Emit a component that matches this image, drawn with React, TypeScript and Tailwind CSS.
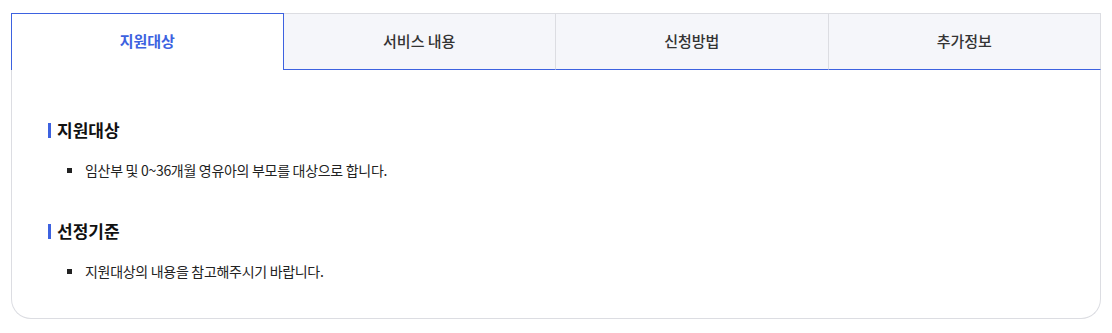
import React from "react";

const tabs = ["지원대상", "서비스 내용", "신청방법", "추가정보"];

function Section({ title, item, className = "" }: { title: string; item: string; className?: string }) {
  return (
    <div className={className}>
      <div className="flex items-center h-[24px]">
        <span className="block w-[3px] h-[15px] bg-[#3d62e0]" />
        <h3 className="ml-[6px] text-[17px] leading-[24px] font-bold text-[#111]">{title}</h3>
      </div>
      <ul className="mt-[17px] pl-[19px]">
        <li className="flex items-center h-[22px]">
          <span className="block w-[5px] h-[5px] bg-[#222]" />
          <span className="ml-[13px] text-[14px] leading-[22px] tracking-[-0.3px] text-[#222]">{item}</span>
        </li>
      </ul>
    </div>
  );
}

export default function App() {
  return (
    <div
      className="bg-white w-[1112px] h-[333px] pt-[13px] pl-[11px]"
      style={{ fontFamily: '"Noto Sans CJK KR", "Noto Sans", sans-serif' }}
    >
      <div className="w-[1090px]">
        <div className="grid grid-cols-4 h-[57px]">
          {tabs.map((t, i) =>
            i === 0 ? (
              <div
                key={t}
                className="flex items-center justify-center bg-white border-t border-l border-r border-[#3d62e0] text-[15px] font-bold text-[#3d62e0]"
              >
                <span className="-mt-[2px]">{t}</span>
              </div>
            ) : (
              <div
                key={t}
                className="flex items-center justify-center bg-[#f5f6fa] border-t border-r border-b border-t-[#dcdde2] border-r-[#dcdde2] border-b-[#3d62e0] text-[15px] font-medium text-[#333]"
              >
                <span>{t}</span>
              </div>
            )
          )}
        </div>
        <div className="border-l border-r border-b border-[#dcdde2] rounded-b-[20px] pt-[48px] pl-[36px] pb-[36px]">
          <Section title="지원대상" item="임산부 및 0~36개월 영유아의 부모를 대상으로 합니다." />
          <Section className="mt-[38px]" title="선정기준" item="지원대상의 내용을 참고해주시기 바랍니다." />
        </div>
      </div>
    </div>
  );
}
